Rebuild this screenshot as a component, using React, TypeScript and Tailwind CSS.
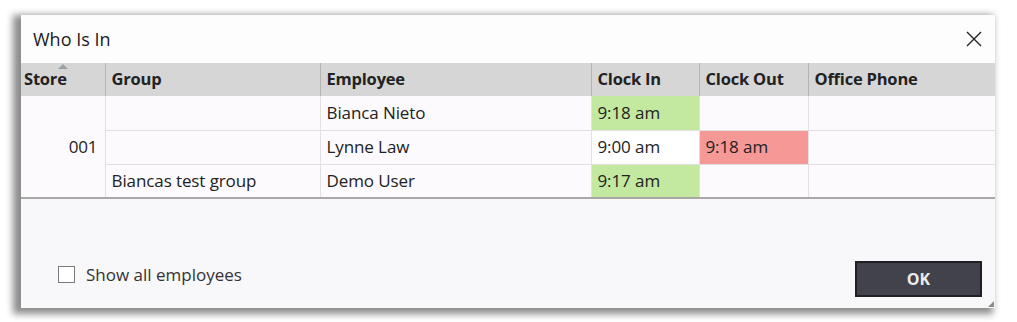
export default function App() {
  const rows = [
    { group: "", employee: "Bianca Nieto", clockIn: "9:18 am", inLate: true, clockOut: "", outFlag: false },
    { group: "", employee: "Lynne Law", clockIn: "9:00 am", inLate: false, clockOut: "9:18 am", outFlag: true },
    { group: "Biancas test group", employee: "Demo User", clockIn: "9:17 am", inLate: true, clockOut: "", outFlag: false },
  ];

  return (
    <div className="w-[1017px] h-[322px] bg-white pt-[15px] pl-[21px] font-['Open_Sans','Noto_Sans',sans-serif] text-[#222]">
      {/* dialog */}
      <div className="relative w-[974px] h-[293px] flex flex-col bg-[#f8f7fa] shadow-[-5px_3px_7px_3px_rgba(0,0,0,0.45)]">
        <div className="h-[48px] bg-[#fdfdfd] flex items-center justify-between pl-[12px] pr-[8px]">
          <span className="text-[18px] text-[#1a1a1a]">Who Is In</span>
          <svg width="26" height="26" viewBox="0 0 26 26" className="text-[#222]">
            <path d="M6 6L20 20M20 6L6 20" stroke="currentColor" strokeWidth="1.4" fill="none" />
          </svg>
        </div>

        <table className="table-fixed border-collapse w-[974px] text-[17px] tracking-[-0.1px] bg-[#fcfafc]">
          <colgroup>
            <col className="w-[84px]" />
            <col className="w-[215px]" />
            <col className="w-[271px]" />
            <col className="w-[108px]" />
            <col className="w-[109px]" />
            <col className="w-[187px]" />
          </colgroup>
          <thead>
            <tr className="h-[33px] bg-[#d6d6d6] text-left font-bold text-[16.5px] tracking-[-0.2px]">
              <th className="relative px-[3px] border-r border-[#b4b4b4]">
                <svg width="10" height="5" viewBox="0 0 10 5" className="absolute left-[37px] top-[1px]">
                  <path d="M0 5L5 0L10 5Z" fill="#9aa3a8" />
                </svg>
                Store
              </th>
              <th className="px-[6px] border-r border-[#b4b4b4]">Group</th>
              <th className="px-[6px] border-r border-[#b4b4b4]">Employee</th>
              <th className="px-[6px] border-r border-[#b4b4b4]">Clock In</th>
              <th className="px-[6px] border-r border-[#b4b4b4]">Clock Out</th>
              <th className="px-[6px]">Office Phone</th>
            </tr>
          </thead>
          <tbody>
            {rows.map((r, i) => (
              <tr key={i} className="h-[34px] border-b border-[#e2dfe2] last:border-b-2 last:border-b-[#a8a8a8]">
                {i === 0 && (
                  <td rowSpan={3} className="text-right pr-[7px] border-r border-[#e2dfe2] border-b-2 border-b-[#a8a8a8]">001</td>
                )}
                <td className="px-[6px] border-r border-[#e2dfe2]">{r.group}</td>
                <td className="px-[6px] border-r border-[#e2dfe2]">{r.employee}</td>
                <td className={`px-[6px] border-r border-[#e2dfe2] ${r.inLate ? "bg-[#c3e89f]" : "bg-white"}`}>{r.clockIn}</td>
                <td className={`px-[6px] border-r border-[#e2dfe2] ${r.outFlag ? "bg-[#f69896]" : ""}`}>{r.clockOut}</td>
                <td className="px-[6px]"></td>
              </tr>
            ))}
          </tbody>
        </table>

        <div className="flex-1 flex items-end justify-between pl-[37px] pr-[13px] pb-[11px]">
          <label className="flex items-center gap-[11px] mb-[10px] text-[17px] text-[#333]">
            <span className="w-[17px] h-[17px] border border-[#7a7a7a] bg-white" />
            Show all employees
          </label>
          <button className="w-[127px] h-[36px] bg-[#42424c] border-2 border-[#1f1f24] text-[#ececec] font-bold text-[16px]">
            OK
          </button>
        </div>

        <svg width="6" height="6" viewBox="0 0 6 6" className="absolute right-[1px] bottom-[1px]">
          <path d="M6 0L6 6L0 6Z" fill="#8a8a8a" />
        </svg>
      </div>
    </div>
  );
}
